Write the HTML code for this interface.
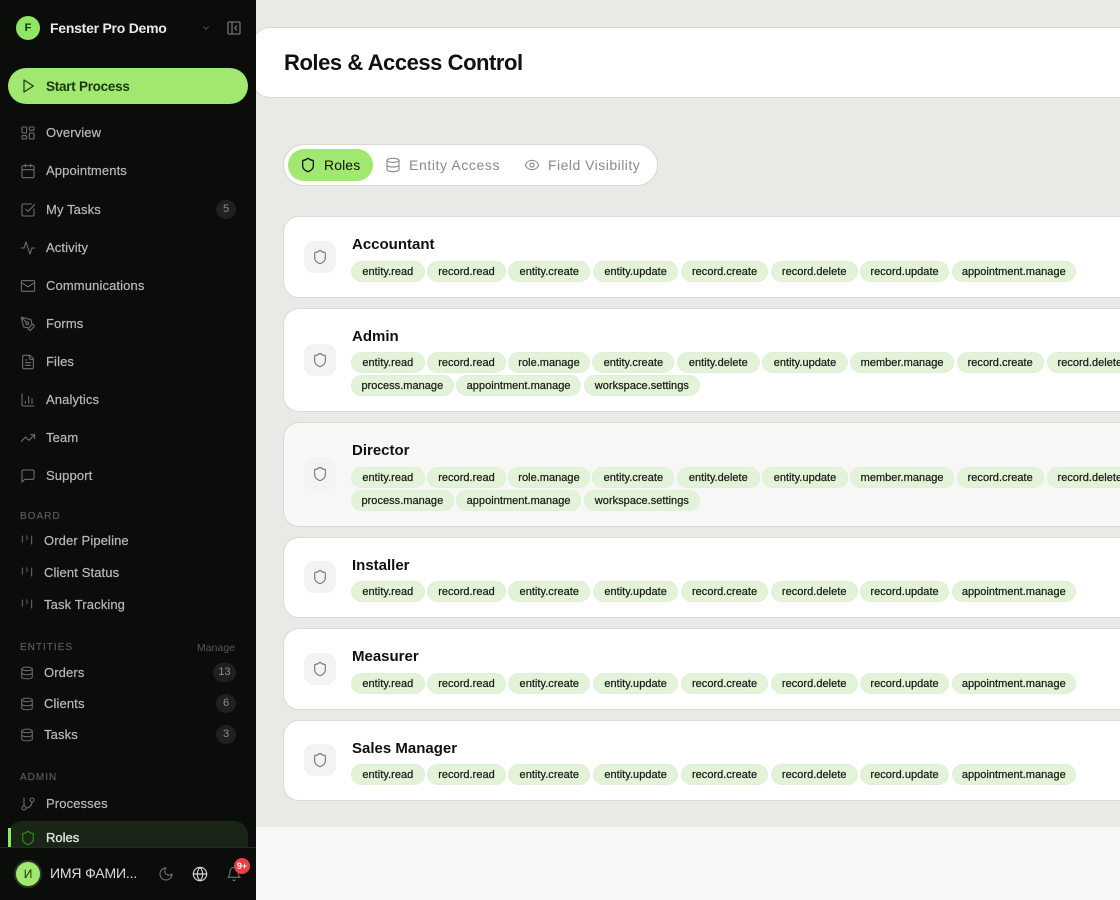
<!DOCTYPE html>
<html lang="en">
<head>
<meta charset="utf-8">
<title>Roles &amp; Access Control</title>
<style>
*{box-sizing:border-box;margin:0;padding:0}
html,body{width:1120px;height:900px;overflow:hidden;background:#f7f7f5;font-family:"Liberation Sans","Noto Sans CJK SC",sans-serif}
.a{position:absolute}
svg.i{fill:none;stroke:currentColor;stroke-width:2;stroke-linecap:round;stroke-linejoin:round;display:block}
#side{left:0;top:0;width:256px;height:900px;background:#0b0d0b;overflow:hidden;z-index:5}
.n{position:absolute;left:46px;font-size:13px;letter-spacing:.12px;line-height:16px;color:#b9bab8;-webkit-text-stroke:.2px #b9bab8;white-space:nowrap}
.n2{left:44px}
.ic{position:absolute;left:20px;width:16px;height:16px;color:#6f716e}
.ic2{left:20px;width:14px;height:14px;color:#6f716e}
.sec{position:absolute;left:20px;font-size:10px;line-height:12px;letter-spacing:1px;color:#555754;-webkit-text-stroke:.25px #555754}
.cnt{position:absolute;height:19px;border-radius:10px;background:#1f211f;color:#8c8e8b;font-size:11px;line-height:19px;text-align:center}
#main{left:256px;top:0;width:864px;height:827px;background:#e8eae6;overflow:hidden}
#hdr{position:absolute;left:-4px;top:27px;width:900px;height:71px;background:#fff;border:1px solid #d8dad5;border-radius:18px}
#hdr b{position:absolute;left:31px;top:21px;font-size:22px;line-height:27px;letter-spacing:-.45px;color:#111}
#tabs{position:absolute;left:27px;top:144px;width:375px;height:42px;background:#fff;border:1px solid #d6d8d3;border-radius:21px}
#pill{position:absolute;left:4px;top:4px;width:85px;height:32px;border-radius:16px;background:#a0e870}
.tab{position:absolute;top:12px;font-size:14px;line-height:16px;color:#8a8a8a;white-space:nowrap}
.card{position:absolute;left:27px;width:900px;background:#fff;border:1px solid #d8dad5;border-radius:16px}
.card.h{background:#f7f7f5}
.sq{position:absolute;left:20px;width:32px;height:32px;border-radius:10px;background:#f3f3f1;color:#777}
.sq svg{position:absolute;left:8px;top:8px;width:16px;height:16px;stroke-width:1.7}
.card b{position:absolute;left:68px;font-size:15px;line-height:18px;color:#111;white-space:nowrap;margin-top:1px}
.tags{position:absolute;left:67px;display:flex;gap:2.67px;width:880px}
.tags span{display:block;flex:none;height:21px;border-radius:11px;background:#e3f3d7;border:1px solid #e1eedb;font-size:11px;letter-spacing:.03px;line-height:20px;text-align:center;color:#1b1d1b;-webkit-text-stroke:.25px #1b1d1b;white-space:nowrap}
.er{width:73.7px}.rr{width:78.3px}.ec{width:82px}.eu{width:85.3px}.rc{width:87.3px}.rd{width:86.7px}.ru{width:88.7px}.am{width:124.5px}.rm{width:81.4px}.ed{width:82.7px}.mm{width:103.6px}.pm{width:102.7px}.ws{width:116.7px}
</style>
</head>
<body>
<svg width="0" height="0" style="position:absolute">
<defs>
<symbol id="dash" viewBox="0 0 24 24"><rect x="3" y="3" width="7" height="9" rx="1"/><rect x="14" y="3" width="7" height="5" rx="1"/><rect x="14" y="12" width="7" height="9" rx="1"/><rect x="3" y="16" width="7" height="5" rx="1"/></symbol>
<symbol id="cal" viewBox="0 0 24 24"><path d="M8 2v4M16 2v4"/><rect x="3" y="4" width="18" height="18" rx="2"/><path d="M3 10h18"/></symbol>
<symbol id="chk" viewBox="0 0 24 24"><path d="M21 10.5V19a2 2 0 0 1-2 2H5a2 2 0 0 1-2-2V5a2 2 0 0 1 2-2h12.5"/><path d="m9 11 3 3L22 4"/></symbol>
<symbol id="act" viewBox="0 0 24 24"><path d="M22 12h-4l-3 9L9 3l-3 9H2"/></symbol>
<symbol id="mail" viewBox="0 0 24 24"><rect x="2" y="4" width="20" height="16" rx="2"/><path d="m22 7-8.97 5.7a1.94 1.94 0 0 1-2.06 0L2 7"/></symbol>
<symbol id="pen" viewBox="0 0 24 24"><path d="M15.707 21.293a1 1 0 0 1-1.414 0l-1.586-1.586a1 1 0 0 1 0-1.414l5.586-5.586a1 1 0 0 1 1.414 0l1.586 1.586a1 1 0 0 1 0 1.414z"/><path d="m18 13-1.375-6.874a1 1 0 0 0-.746-.776L3.235 2.028a1 1 0 0 0-1.207 1.207L5.35 15.879a1 1 0 0 0 .776.746L13 18"/><path d="m2.3 2.3 7.286 7.286"/><circle cx="11" cy="11" r="2"/></symbol>
<symbol id="file" viewBox="0 0 24 24"><path d="M15 2H6a2 2 0 0 0-2 2v16a2 2 0 0 0 2 2h12a2 2 0 0 0 2-2V7Z"/><path d="M14 2v4a2 2 0 0 0 2 2h4"/><path d="M10 9H8M16 13H8M16 17H8"/></symbol>
<symbol id="bar" viewBox="0 0 24 24"><path d="M3 3v16a2 2 0 0 0 2 2h16"/><path d="M8 17v-3M13 17V7M18 17V10"/></symbol>
<symbol id="trend" viewBox="0 0 24 24"><path d="M16 7h6v6"/><path d="m22 7-8.5 8.5-5-5L2 17"/></symbol>
<symbol id="msg" viewBox="0 0 24 24"><path d="M21 15a2 2 0 0 1-2 2H7l-4 4V5a2 2 0 0 1 2-2h14a2 2 0 0 1 2 2z"/></symbol>
<symbol id="kan" viewBox="0 0 24 24"><path d="M4 5v11M12 5v6M20 5v14"/></symbol>
<symbol id="db" viewBox="0 0 24 24"><ellipse cx="12" cy="5" rx="9" ry="3"/><path d="M3 5V19A9 3 0 0 0 21 19V5"/><path d="M3 12A9 3 0 0 0 21 12"/></symbol>
<symbol id="git" viewBox="0 0 24 24"><path d="M6 3v12"/><circle cx="18" cy="6" r="3"/><circle cx="6" cy="18" r="3"/><path d="M18 9a9 9 0 0 1-9 9"/></symbol>
<symbol id="shield" viewBox="0 0 24 24"><path d="M20 13c0 5-3.5 7.5-7.66 8.95a1 1 0 0 1-.67-.01C7.5 20.5 4 18 4 13V6a1 1 0 0 1 1-1c2 0 4.5-1.2 6.24-2.72a1.17 1.17 0 0 1 1.52 0C14.51 3.81 17 5 19 5a1 1 0 0 1 1 1z"/></symbol>
<symbol id="eye" viewBox="0 0 24 24"><path d="M2.062 12.348a1 1 0 0 1 0-.696 10.75 10.75 0 0 1 19.876 0 1 1 0 0 1 0 .696 10.75 10.75 0 0 1-19.876 0"/><circle cx="12" cy="12" r="3"/></symbol>
<symbol id="moon" viewBox="0 0 24 24"><path d="M12 3a6 6 0 0 0 9 9 9 9 0 1 1-9-9Z"/></symbol>
<symbol id="globe" viewBox="0 0 24 24"><circle cx="12" cy="12" r="10"/><path d="M12 2a14.5 14.5 0 0 0 0 20 14.5 14.5 0 0 0 0-20"/><path d="M2 12h20"/></symbol>
<symbol id="bell" viewBox="0 0 24 24"><path d="M6 8a6 6 0 0 1 12 0c0 7 3 9 3 9H3s3-2 3-9"/><path d="M10.3 21a1.94 1.94 0 0 0 3.4 0"/></symbol>
<symbol id="panel" viewBox="0 0 24 24"><rect x="3" y="3" width="18" height="18" rx="2"/><path d="M9 3v18"/><path d="m16 15-3-3 3-3"/></symbol>
<symbol id="play" viewBox="0 0 24 24"><path d="M6 3 20 12 6 21Z"/></symbol>
<symbol id="chev" viewBox="0 0 24 24"><path d="m6 9 6 6 6-6"/></symbol>
</defs>
</svg>

<div id="main" class="a">
  <div id="hdr"><b>Roles &amp; Access Control</b></div>
  <div id="tabs">
    <div id="pill"></div>
    <svg class="i a" style="left:16px;top:12px;width:16px;height:16px;color:#111"><use href="#shield"/></svg>
    <div class="tab" style="left:40px;color:#111;letter-spacing:.1px">Roles</div>
    <svg class="i a" style="left:101px;top:12px;width:16px;height:16px;color:#8a8a8a;stroke-width:1.7"><use href="#db"/></svg>
    <div class="tab" style="left:125px;letter-spacing:.6px">Entity Access</div>
    <svg class="i a" style="left:240px;top:12px;width:16px;height:16px;color:#8a8a8a;stroke-width:1.7"><use href="#eye"/></svg>
    <div class="tab" style="left:264px;letter-spacing:.48px">Field Visibility</div>
  </div>

  <div class="card" style="top:216px;height:82px">
    <div class="sq" style="top:24px"><svg class="i"><use href="#shield"/></svg></div>
    <b style="top:18px">Accountant</b>
    <div class="tags" style="top:44px"><span class="er">entity.read</span><span class="rr">record.read</span><span class="ec">entity.create</span><span class="eu">entity.update</span><span class="rc">record.create</span><span class="rd">record.delete</span><span class="ru">record.update</span><span class="am">appointment.manage</span></div>
  </div>

  <div class="card" style="top:308px;height:104px">
    <div class="sq" style="top:35px"><svg class="i"><use href="#shield"/></svg></div>
    <b style="top:18px">Admin</b>
    <div class="tags" style="top:43px"><span class="er">entity.read</span><span class="rr">record.read</span><span class="rm">role.manage</span><span class="ec">entity.create</span><span class="ed">entity.delete</span><span class="eu">entity.update</span><span class="mm">member.manage</span><span class="rc">record.create</span><span class="rd">record.delete</span></div>
    <div class="tags" style="top:66px"><span class="pm">process.manage</span><span class="am">appointment.manage</span><span class="ws">workspace.settings</span></div>
  </div>

  <div class="card h" style="top:422px;height:105px">
    <div class="sq" style="top:35px"><svg class="i"><use href="#shield"/></svg></div>
    <b style="top:18px">Director</b>
    <div class="tags" style="top:44px"><span class="er">entity.read</span><span class="rr">record.read</span><span class="rm">role.manage</span><span class="ec">entity.create</span><span class="ed">entity.delete</span><span class="eu">entity.update</span><span class="mm">member.manage</span><span class="rc">record.create</span><span class="rd">record.delete</span></div>
    <div class="tags" style="top:67px"><span class="pm">process.manage</span><span class="am">appointment.manage</span><span class="ws">workspace.settings</span></div>
  </div>

  <div class="card" style="top:537px;height:81px">
    <div class="sq" style="top:23px"><svg class="i"><use href="#shield"/></svg></div>
    <b style="top:18px">Installer</b>
    <div class="tags" style="top:43px"><span class="er">entity.read</span><span class="rr">record.read</span><span class="ec">entity.create</span><span class="eu">entity.update</span><span class="rc">record.create</span><span class="rd">record.delete</span><span class="ru">record.update</span><span class="am">appointment.manage</span></div>
  </div>

  <div class="card" style="top:628px;height:82px">
    <div class="sq" style="top:24px"><svg class="i"><use href="#shield"/></svg></div>
    <b style="top:18px">Measurer</b>
    <div class="tags" style="top:44px"><span class="er">entity.read</span><span class="rr">record.read</span><span class="ec">entity.create</span><span class="eu">entity.update</span><span class="rc">record.create</span><span class="rd">record.delete</span><span class="ru">record.update</span><span class="am">appointment.manage</span></div>
  </div>

  <div class="card" style="top:720px;height:81px">
    <div class="sq" style="top:23px"><svg class="i"><use href="#shield"/></svg></div>
    <b style="top:18px">Sales Manager</b>
    <div class="tags" style="top:43px"><span class="er">entity.read</span><span class="rr">record.read</span><span class="ec">entity.create</span><span class="eu">entity.update</span><span class="rc">record.create</span><span class="rd">record.delete</span><span class="ru">record.update</span><span class="am">appointment.manage</span></div>
  </div>
</div>

<div id="side" class="a">
  <div class="a" style="left:16px;top:16px;width:24px;height:24px;border-radius:50%;background:#8ee662;color:#16300a;font-size:11px;font-weight:700;line-height:24px;text-align:center">F</div>
  <div class="a" style="left:50px;top:19px;font-size:14px;line-height:18px;font-weight:700;color:#e9e9e7;letter-spacing:-.25px;white-space:nowrap">Fenster Pro Demo</div>
  <svg class="i a" style="left:201px;top:23px;width:10px;height:10px;color:#5f615e"><use href="#chev"/></svg>
  <svg class="i a" style="left:226px;top:20px;width:16px;height:16px;color:#6f716e"><use href="#panel"/></svg>

  <div class="a" style="left:8px;top:68px;width:240px;height:36px;border-radius:18px;background:#a0e870"></div>
  <svg class="i a" style="left:20px;top:78px;width:16px;height:16px;color:#1f3a12;stroke-width:1.8"><use href="#play"/></svg>
  <div class="a" style="left:46px;top:78px;font-size:13.5px;line-height:17px;font-weight:700;color:#1c3510;letter-spacing:-.26px;white-space:nowrap">Start Process</div>

  <svg class="i ic" style="top:125px;stroke-width:1.6"><use href="#dash"/></svg><div class="n" style="top:125px">Overview</div>
  <svg class="i ic" style="top:163px;stroke-width:1.6"><use href="#cal"/></svg><div class="n" style="top:163px">Appointments</div>
  <svg class="i ic" style="top:202px;stroke-width:1.6"><use href="#chk"/></svg><div class="n" style="top:202px">My Tasks</div>
  <div class="cnt" style="left:216px;top:200px;width:20px">5</div>
  <svg class="i ic" style="top:240px;stroke-width:1.6"><use href="#act"/></svg><div class="n" style="top:240px">Activity</div>
  <svg class="i ic" style="top:278px;stroke-width:1.6"><use href="#mail"/></svg><div class="n" style="top:278px">Communications</div>
  <svg class="i ic" style="top:316px;stroke-width:1.6"><use href="#pen"/></svg><div class="n" style="top:316px">Forms</div>
  <svg class="i ic" style="top:354px;stroke-width:1.6"><use href="#file"/></svg><div class="n" style="top:354px">Files</div>
  <svg class="i ic" style="top:392px;stroke-width:1.6"><use href="#bar"/></svg><div class="n" style="top:392px">Analytics</div>
  <svg class="i ic" style="top:430px;stroke-width:1.6"><use href="#trend"/></svg><div class="n" style="top:430px">Team</div>
  <svg class="i ic" style="top:468px;stroke-width:1.6"><use href="#msg"/></svg><div class="n" style="top:468px">Support</div>

  <div class="sec" style="top:511px">BOARD</div>
  <svg class="i a ic2" style="top:533px;stroke-width:1.6"><use href="#kan"/></svg><div class="n n2" style="top:533px">Order Pipeline</div>
  <svg class="i a ic2" style="top:565px;stroke-width:1.6"><use href="#kan"/></svg><div class="n n2" style="top:565px">Client Status</div>
  <svg class="i a ic2" style="top:597px;stroke-width:1.6"><use href="#kan"/></svg><div class="n n2" style="top:597px">Task Tracking</div>

  <div class="sec" style="top:642px">ENTITIES</div>
  <div class="a" style="left:197px;top:642px;font-size:10.5px;letter-spacing:.03px;line-height:13px;color:#555754">Manage</div>
  <svg class="i a ic2" style="top:666px;stroke-width:1.7"><use href="#db"/></svg><div class="n n2" style="top:665px">Orders</div>
  <div class="cnt" style="left:213px;top:663px;width:23px">13</div>
  <svg class="i a ic2" style="top:697px;stroke-width:1.7"><use href="#db"/></svg><div class="n n2" style="top:696px">Clients</div>
  <div class="cnt" style="left:216px;top:694px;width:20px">6</div>
  <svg class="i a ic2" style="top:728px;stroke-width:1.7"><use href="#db"/></svg><div class="n n2" style="top:727px">Tasks</div>
  <div class="cnt" style="left:216px;top:725px;width:20px">3</div>

  <div class="sec" style="top:772px">ADMIN</div>
  <svg class="i ic" style="top:796px;stroke-width:1.6"><use href="#git"/></svg><div class="n" style="top:796px">Processes</div>

  <div class="a" style="left:8px;top:821px;width:240px;height:40px;border-radius:14px;background:#1b2517"></div>
  <div class="a" style="left:8px;top:828px;width:3px;height:22px;background:#8ee662"></div>
  <svg class="i ic" style="left:20px;top:830px;color:#2f8a12;stroke-width:1.8"><use href="#shield"/></svg>
  <div class="n" style="top:830px;color:#e3e4e1;-webkit-text-stroke:.35px #e3e4e1;letter-spacing:0">Roles</div>

  <div class="a" style="left:0;top:847px;width:256px;height:53px;background:#0b0d0b;border-top:1px solid #262826"></div>
  <div class="a" style="left:14px;top:860px;width:28px;height:28px;border-radius:50%;background:#a0e870;border:2px solid #2a3525;color:#1c3510;font-size:12px;line-height:24px;text-align:center">И</div>
  <div class="a" style="left:50px;top:865px;font-size:14px;line-height:17px;color:#dcdcda;letter-spacing:-.15px;white-space:nowrap">ИМЯ ФАМИ...</div>
  <svg class="i a" style="left:158px;top:866px;width:16px;height:16px;color:#6f716e;stroke-width:1.7"><use href="#moon"/></svg>
  <svg class="i a" style="left:192px;top:866px;width:16px;height:16px;color:#d8d8d6;stroke-width:1.7"><use href="#globe"/></svg>
  <svg class="i a" style="left:226px;top:866px;width:16px;height:16px;color:#6f716e;stroke-width:1.7"><use href="#bell"/></svg>
  <div class="a" style="left:234px;top:858px;width:16px;height:16px;border-radius:50%;background:#ef3d46;color:#fff;font-size:9px;font-weight:700;line-height:16px;text-align:center">9+</div>
</div>
</body>
</html>
